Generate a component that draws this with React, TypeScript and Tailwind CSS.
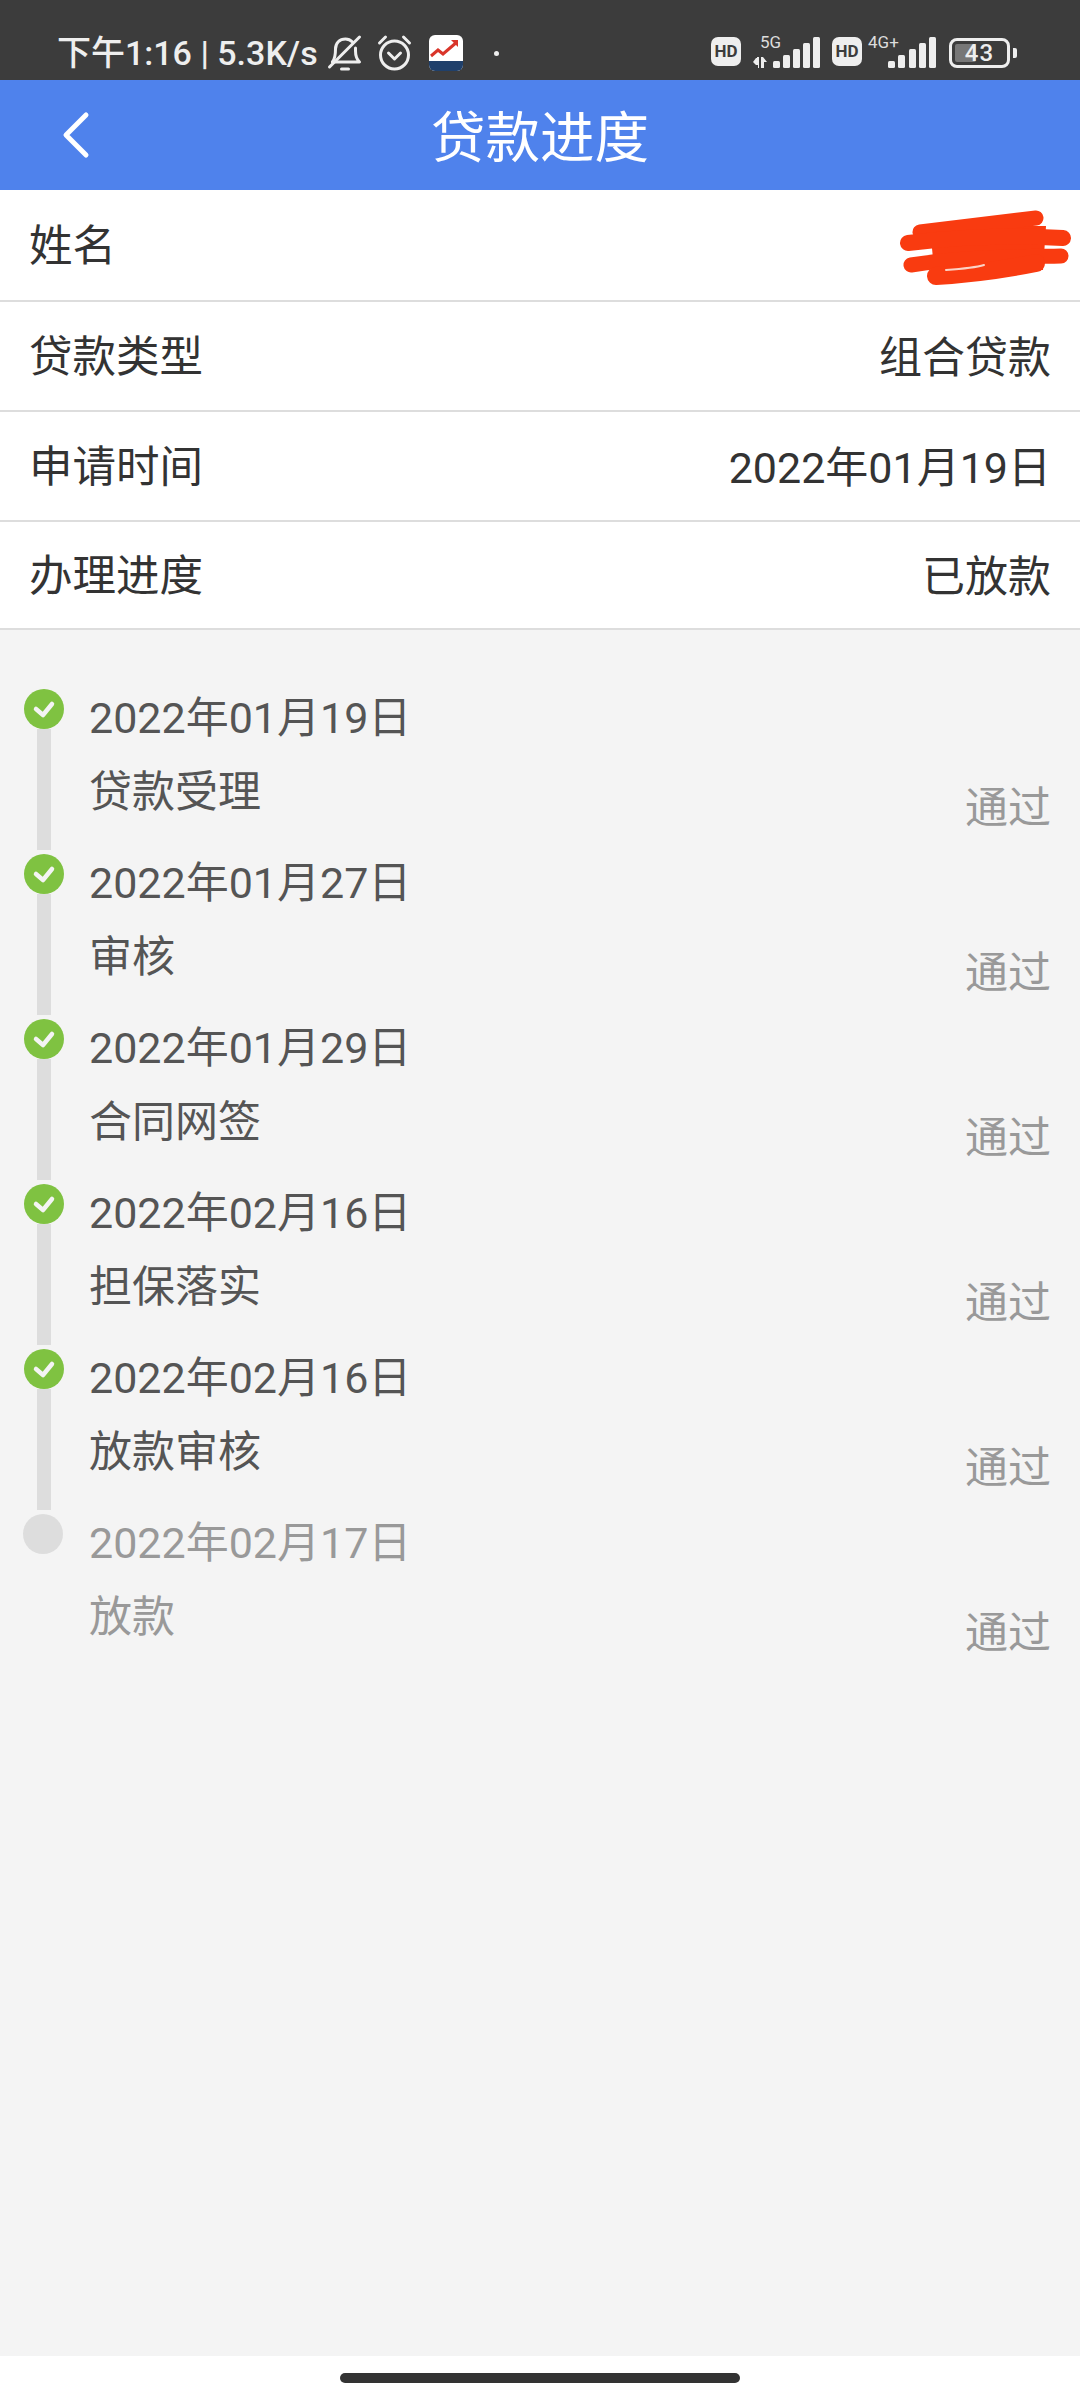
import type { ReactNode } from "react";

const infoRows = [
  { label: "贷款类型", value: "组合贷款", height: "h-[110px]" },
  { label: "申请时间", value: "2022年01月19日", height: "h-[110px]" },
  { label: "办理进度", value: "已放款", height: "h-[108px]" },
];

const steps = [
  { date: "2022年01月19日", name: "贷款受理", done: true },
  { date: "2022年01月27日", name: "审核", done: true },
  { date: "2022年01月29日", name: "合同网签", done: true },
  { date: "2022年02月16日", name: "担保落实", done: true },
  { date: "2022年02月16日", name: "放款审核", done: true },
  { date: "2022年02月17日", name: "放款", done: false },
];

function SignalBars({ xs }: { xs: number[] }) {
  const heights = [7, 13, 19, 25, 31];
  return (
    <>
      {xs.map((x, i) => (
        <rect key={x} x={x} y={33 - heights[i]} width="7" height={heights[i]} rx="1.5" fill="#eeeeee" />
      ))}
    </>
  );
}

function HdBadge() {
  return (
    <div className="flex h-[29px] w-[30px] items-center justify-center rounded-[7px] bg-[#eeeeee] text-[17px] font-bold leading-none text-[#3c3c3c] font-['Roboto',sans-serif]">
      HD
    </div>
  );
}

function StatusBar() {
  return (
    <div className="flex h-[80px] items-end justify-between bg-[#3c3c3c] pl-[57px] pr-[63px] text-[#eeeeee]">
      <div className="mb-[7px] flex h-[40px] items-center">
        <span className="w-[269px] text-[34px] font-medium leading-none whitespace-nowrap">下午1:16 | 5.3K/s</span>
        <svg width="37" height="38" viewBox="0 0 36 38" fill="none" stroke="#eeeeee" strokeWidth="3" strokeLinecap="round" strokeLinejoin="round">
          <path d="M6 28c3-4 3-8 3-13 0-6 4-10 10-10 3 0 5 1 7 3" />
          <path d="M29 14v3c0 5 1 8 4 11H6" />
          <path d="M3 33 33 3" />
          <path d="M15 35h7" />
        </svg>
        <svg width="37" height="38" viewBox="0 0 36 38" fill="none" stroke="#eeeeee" strokeWidth="3" strokeLinecap="round" strokeLinejoin="round" className="ml-[13px]">
          <circle cx="18" cy="21" r="14" />
          <path d="M12 19l6 6 6-6" />
          <path d="M3 9l6-6M33 9l-6-6" />
        </svg>
        <svg width="36" height="36" viewBox="0 0 34 36" className="ml-[15px]">
          <rect width="34" height="36" rx="6" fill="#ffffff" />
          <path d="M0 26h34v4a6 6 0 0 1-6 6H6a6 6 0 0 1-6-6z" fill="#20406b" />
          <path d="M2 21l7-6 5 4 14-12" fill="none" stroke="#d9352a" strokeWidth="3" />
          <path d="M22 5h7v7z" fill="#d9352a" />
        </svg>
        <span className="ml-[30px] h-[5px] w-[5px] rounded-full bg-[#eeeeee]" />
      </div>
      <div className="mb-[11px] flex items-end">
        <div className="mb-[3px]">
          <HdBadge />
        </div>
        <div className="relative ml-[11px] h-[34px] w-[69px]">
          <span className="absolute left-[8px] top-[-1px] text-[17px] leading-none text-[#dddddd] font-['Roboto',sans-serif]">5G</span>
          <svg width="69" height="34" viewBox="0 0 69 34" className="absolute inset-0">
            <path d="M1 27l3-4h1v-1h2v11H6v-3H4zM9 22h2l4 5h-3v6h-3z" fill="#eeeeee" />
            <SignalBars xs={[21, 31, 41, 51, 61]} />
          </svg>
        </div>
        <div className="mb-[3px] ml-[11px]">
          <HdBadge />
        </div>
        <div className="relative ml-[5px] h-[34px] w-[69px]">
          <span className="absolute left-[1px] top-[-1px] text-[17px] leading-none text-[#dddddd] font-['Roboto',sans-serif]">4G+</span>
          <svg width="69" height="34" viewBox="0 0 69 34" className="absolute inset-0">
            <SignalBars xs={[21, 31, 42, 52, 62]} />
          </svg>
        </div>
        <div className="mb-[1px] ml-[13px] flex items-center">
          <div className="relative flex h-[30px] w-[61px] items-center rounded-[8px] border-[3px] border-[#eeeeee] p-[3px]">
            <div className="h-full w-[21px] rounded-[2px] bg-[#777777]" />
            <span className="absolute inset-0 text-center text-[24px] font-medium leading-[24px] tracking-[1px] text-[#eeeeee] font-['Roboto',sans-serif]">43</span>
          </div>
          <div className="ml-[3px] h-[10px] w-[4px] rounded-r-[2px] bg-[#eeeeee]" />
        </div>
      </div>
    </div>
  );
}

function Row({ label, children, height }: { label: string; children: ReactNode; height: string }) {
  return (
    <div className={`flex items-center justify-between border-b-2 border-[#dddddd] bg-white pl-[29px] pr-[29px] ${height}`}>
      <span className="mt-[4px] text-[43.5px] text-[#333333]">{label}</span>
      {children}
    </div>
  );
}

function Scribble() {
  return (
    <svg width="175" height="78" viewBox="0 0 175 78" fill="none" stroke="#f93b10" strokeLinecap="round" className="mr-[-22px] mt-[8px]">
      <path d="M32 16h116L145 60H36z" fill="#f93b10" stroke="none" />
      <path d="M22 22 138 8" strokeWidth="15" />
      <path d="M10 33c50-6 105-8 155-5" strokeWidth="16" />
      <path d="M13 55c50-8 100-8 150-9" strokeWidth="15" />
      <path d="M38 66c35-2 70-7 100-13" strokeWidth="18" />
      <path d="M48 60c14-1 28-2 38-5" stroke="#fbd3c6" strokeWidth="2" />
    </svg>
  );
}

function Step({ date, name, done, last }: { date: string; name: string; done: boolean; last: boolean }) {
  return (
    <div className="flex h-[165px]">
      <div className="flex w-[89px] shrink-0 flex-col pl-[24px]">
        {done ? (
          <div className="flex h-[40px] w-[40px] items-center justify-center rounded-full bg-[#7fc241]">
            <svg width="24" height="20" viewBox="0 0 24 20" fill="none" stroke="#f4f4f4" strokeWidth="4.5" strokeLinecap="round" strokeLinejoin="round">
              <path d="M4 10l7 6 9-11" />
            </svg>
          </div>
        ) : (
          <div className="ml-[-1px] h-[40px] w-[40px] rounded-full bg-[#dddddd]" />
        )}
        {!last && <div className="ml-[13px] h-[121px] w-[14px] bg-[#dddddd]" />}
      </div>
      <div className={`flex-1 pt-[10px] ${done ? "text-[#555555]" : "text-[#999999]"}`}>
        <div className="flex h-[38px] items-center whitespace-nowrap text-[43px] leading-none">{date}</div>
        <div className="mt-[33px] flex items-start justify-between pr-[29px]">
          <span className="h-[44px] leading-[44px]">{name}</span>
          <span className="mt-[16px] h-[44px] leading-[44px] text-[#999999]">通过</span>
        </div>
      </div>
    </div>
  );
}

export default function App() {
  return (
    <div className="flex min-h-[2400px] flex-col bg-white text-[43px] font-['Roboto','Noto_Sans_CJK_SC',sans-serif]">
      <StatusBar />
      <div className="flex h-[110px] items-center bg-[#4f82ec]">
        <svg width="36" height="52" viewBox="0 0 36 52" fill="none" stroke="#ffffff" strokeWidth="5" strokeLinecap="round" strokeLinejoin="round" className="ml-[60px]">
          <path d="M26 6 6 26l20 20" />
        </svg>
        <div className="ml-[335px] mt-[6px] text-[54.5px] leading-none text-white">贷款进度</div>
      </div>
      <Row label="姓名" height="h-[112px]">
        <Scribble />
      </Row>
      {infoRows.map((r) => (
        <Row key={r.label} label={r.label} height={r.height}>
          <span className="mt-[4px] whitespace-nowrap text-[#333333]">{r.value}</span>
        </Row>
      ))}
      <div className="flex-1 bg-[#f4f4f4] pt-[59px]">
        {steps.map((s, i) => (
          <Step key={i} date={s.date} name={s.name} done={s.done} last={i === steps.length - 1} />
        ))}
      </div>
      <div className="flex h-[44px] items-start justify-center bg-white pt-[17px]">
        <div className="h-[10px] w-[400px] rounded-full bg-[#333333]" />
      </div>
    </div>
  );
}
